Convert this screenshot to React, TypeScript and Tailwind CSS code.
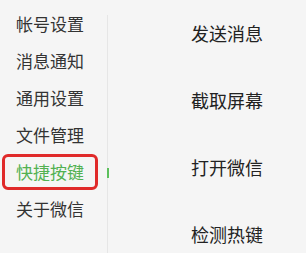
const menu = ['帐号设置', '消息通知', '通用设置', '文件管理', '快捷按键', '关于微信'];
const actions = ['发送消息', '截取屏幕', '打开微信', '检测热键'];

export default function App() {
  return (
    <div
      className="flex h-[253px] w-[306px] overflow-hidden bg-[#f5f5f5] text-[17px]"
      style={{ fontFamily: '"Noto Sans CJK SC", "Noto Sans", sans-serif' }}
    >
      {/* settings menu */}
      <div className="flex w-[107px] shrink-0 flex-col pt-[5px]">
        {menu.map((m) => {
          const active = m === '快捷按键';
          return (
            <div key={m} className="relative flex h-[37px] shrink-0 items-center pl-4">
              {active && (
                <div className="absolute left-[2px] top-[1px] h-[36px] w-[96px] rounded-[6px] border-[3px] border-[#e02a2a]" />
              )}
              <span className={active ? 'text-[#52b152]' : 'text-[#333]'}>{m}</span>
            </div>
          );
        })}
      </div>

      {/* divider */}
      <div className="relative mt-[15px] w-px bg-[#e6e6e6]">
        <div className="absolute left-0 top-[153px] h-[10px] w-[2px] bg-[#5cc05c]" />
      </div>

      {/* shortcut list */}
      <div className="flex flex-col pl-[83px] text-[18px]">
        {actions.map((a) => (
          <div key={a} className="flex h-[67px] shrink-0 items-center text-[#222]">
            {a}
          </div>
        ))}
      </div>
    </div>
  );
}
